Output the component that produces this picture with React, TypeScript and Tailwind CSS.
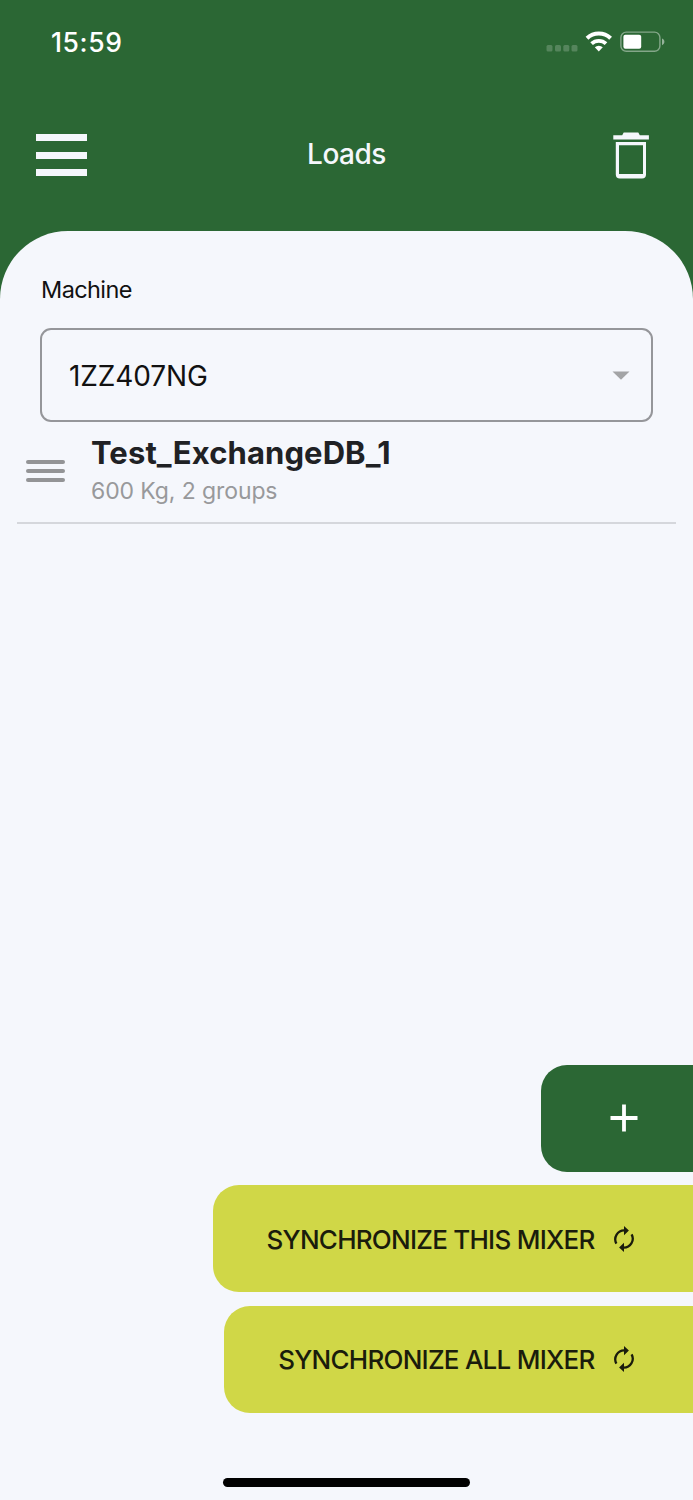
import type { ReactNode } from "react";

type Load = { name: string; weight: number; groups: number };

const MACHINE = "1ZZ407NG";

const LOADS: Load[] = [{ name: "Test_ExchangeDB_1", weight: 600, groups: 2 }];

function StatusBar() {
  return (
    <div className="flex h-[84px] items-center justify-between pl-[51px] pr-7 text-white">
      <span className="text-[26.5px] leading-8 font-medium tracking-[0.6px]">15:59</span>
      <svg width="120" height="24" viewBox="545 30 120 24" fill="none">
        <g fill="#fff" fillOpacity="0.2">
          <rect x="546.5" y="45" width="6" height="6.5" rx="1.5" />
          <rect x="555" y="45" width="6" height="6.5" rx="1.5" />
          <rect x="563.3" y="45" width="6" height="6.5" rx="1.5" />
          <rect x="571.5" y="45" width="6" height="6.5" rx="1.5" />
        </g>
        {/* wifi */}
        <path d="M587 38.3a17 17 0 0 1 23.6 0" stroke="#fff" strokeWidth="4" />
        <path d="M591.6 43.7a10.4 10.4 0 0 1 14.4 0" stroke="#fff" strokeWidth="3.8" />
        <path d="M598.8 51.4l-4-4.1a5.8 5.8 0 0 1 8 0z" fill="#fff" />
        {/* battery */}
        <rect x="620.9" y="32.1" width="39" height="19.2" rx="5.4" stroke="#fff" strokeOpacity="0.42" strokeWidth="1.4" />
        <rect x="623.4" y="34.8" width="17.8" height="14" rx="2" fill="#fff" />
        <path d="M662 38.4c1.5.6 2.4 1.8 2.4 3.4s-.9 2.8-2.4 3.4z" fill="#fff" fillOpacity="0.5" />
      </svg>
    </div>
  );
}

function TrashIcon() {
  return (
    <svg width="36" height="48" viewBox="613 132 36 48" fill="#f5f7fc">
      <path d="M613.3 135.2h8.9l1.5-2.7h14.6l1.5 2.7h9.1v4.3h-35.6z" />
      <path
        fillRule="evenodd"
        d="M615.8 142h30.2v32.6a4 4 0 0 1-4 4h-22.2a4 4 0 0 1-4-4zM619 145.3v28.7h24v-28.7z"
      />
    </svg>
  );
}

function SyncIcon() {
  return (
    <svg width="20" height="26" viewBox="0 0 20 26" fill="none" stroke="#1a1c0c" strokeWidth="2.3">
      <path d="M2.4 17.6A8.9 8.9 0 0 1 10.6 4.4" />
      <path d="M17.6 8.4A8.9 8.9 0 0 1 9.4 21.6" />
      <path d="M10 0l4.9 4.6-4.9 4.7zM10 16.7l-4.9 4.7 4.9 4.6z" fill="#1a1c0c" stroke="none" />
    </svg>
  );
}

function Header() {
  return (
    <header className="flex h-[139px] items-center justify-between px-9 text-[#f5f7fc]">
      <button aria-label="Menu" className="mt-[3px] flex w-[51px] flex-col gap-[10.4px]">
        <span className="h-[7px] bg-[#f5f7fc]" />
        <span className="h-[7px] bg-[#f5f7fc]" />
        <span className="h-[7px] bg-[#f5f7fc]" />
      </button>
      <h1 className="ml-[-7px] text-[28px] leading-9 font-medium tracking-[-0.5px]">Loads</h1>
      <button aria-label="Delete" className="mr-2 mt-1">
        <TrashIcon />
      </button>
    </header>
  );
}

function LoadRow({ load }: { load: Load }) {
  return (
    <li className="mx-[17px] flex h-[102px] border-b-2 border-[#d5d7dc] pl-[9px]">
      <div className="mt-[38px] flex w-[39px] flex-col gap-[5px]">
        <span className="h-[4px] rounded-full bg-[#939496]" />
        <span className="h-[4px] rounded-full bg-[#939496]" />
        <span className="h-[4px] rounded-full bg-[#939496]" />
      </div>
      <div className="ml-[26px] mt-[11px]">
        <p className="text-[31px] leading-10 font-bold tracking-[0.1px] text-[#202124]">{load.name}</p>
        <p className="text-[23px] leading-9 tracking-[-0.1px] text-[#98999b]">
          {load.weight} Kg, {load.groups} groups
        </p>
      </div>
    </li>
  );
}

function SyncButton({ children }: { children: ReactNode }) {
  return (
    <button className="flex h-[107px] items-center rounded-l-[26px] bg-[#d0d747] pl-[54px] pr-[59px] text-[26px] font-medium text-[#1a1c0c]">
      <span className="mt-px whitespace-nowrap tracking-[-0.75px]">{children}</span>
      <span className="ml-[19.5px]">
        <SyncIcon />
      </span>
    </button>
  );
}

export default function App() {
  return (
    <div className="flex h-[1500px] w-[693px] flex-col overflow-hidden bg-[#2b6734] font-['Inter',sans-serif]">
      <StatusBar />
      <Header />
      <main className="mt-2 flex flex-1 flex-col rounded-t-[68px] bg-[#f5f7fc]">
        <p className="ml-[41px] mt-[43px] text-[23.5px] leading-8 tracking-[-0.6px] text-[#111]">Machine</p>
        <div className="mx-10 mt-[22px] flex h-[94px] items-center justify-between rounded-[11px] border-2 border-[#95969a] pl-[27px] pr-[21px]">
          <span className="mt-px text-[28px] tracking-[-0.1px] text-[#111]">{MACHINE}</span>
          <svg width="18" height="9" viewBox="0 0 18 9" fill="#a3a4a6">
            <path d="M.5.5h17L9 8.8z" />
          </svg>
        </div>
        <ul>
          {LOADS.map((load) => (
            <LoadRow key={load.name} load={load} />
          ))}
        </ul>

        <div className="mt-auto flex flex-col items-end gap-[13.5px]">
          <button
            aria-label="Add load"
            className="flex h-[107px] w-[152.5px] items-center justify-end rounded-l-[26px] bg-[#2b6734] pr-[55px]"
          >
            <svg width="28" height="28" viewBox="0 0 28 28" stroke="#fff" strokeWidth="3.8">
              <path d="M.5 14h27M14 .5v27" />
            </svg>
          </button>
          <SyncButton>SYNCHRONIZE THIS MIXER</SyncButton>
          <SyncButton>SYNCHRONIZE ALL MIXER</SyncButton>
        </div>
        <div className="mx-auto mb-[13.5px] mt-[65.5px] h-[8.5px] w-[247px] shrink-0 rounded-full bg-black" />
      </main>
    </div>
  );
}
